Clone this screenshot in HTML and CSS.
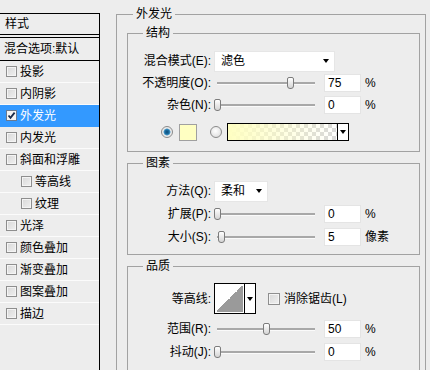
FILE: index.html
```html
<!DOCTYPE html>
<html lang="zh">
<head>
<meta charset="utf-8">
<link rel="stylesheet" href="styles.css">
</head>
<body>
<aside class="styles">
  <div class="head">样式</div>
  <div class="blend">混合选项:默认</div>
  <ul class="list">
    <li><span class="cb"></span>投影</li>
    <li><span class="cb"></span>内阴影</li>
    <li class="sel"><span class="cb on"><svg width="9" height="9" viewBox="0 0 9 9"><path d="M1.5 4.5 L3.5 6.8 L7.6 1.6" fill="none" stroke="#1a2a4a" stroke-width="1.8"/></svg></span>外发光</li>
    <li><span class="cb"></span>内发光</li>
    <li><span class="cb"></span>斜面和浮雕</li>
    <li class="sub"><span class="cb"></span>等高线</li>
    <li class="sub"><span class="cb"></span>纹理</li>
    <li><span class="cb"></span>光泽</li>
    <li><span class="cb"></span>颜色叠加</li>
    <li><span class="cb"></span>渐变叠加</li>
    <li><span class="cb"></span>图案叠加</li>
    <li><span class="cb"></span>描边</li>
  </ul>
</aside>
<main class="main">
  <fieldset class="outer">
    <legend class="outer-title">外发光</legend>

    <fieldset class="grp g1">
      <legend>结构</legend>
      <div class="row r22">
        <span class="lbl">混合模式(E):</span>
        <div class="select wide"><span>滤色</span><i class="tri"></i></div>
      </div>
      <div class="row r22">
        <span class="lbl">不透明度(O):</span>
        <div class="slider"><span class="thumb" style="left:73px"></span></div>
        <span class="num">75</span><span class="unit">%</span>
      </div>
      <div class="row r22">
        <span class="lbl">杂色(N):</span>
        <div class="slider"><span class="thumb" style="left:0px"></span></div>
        <span class="num">0</span><span class="unit">%</span>
      </div>
      <div class="row color-row">
        <span class="radio on"></span>
        <span class="swatch"></span>
        <span class="radio"></span>
        <div class="gradbox"><span class="grad"></span><span class="drop"><i class="tri"></i></span></div>
      </div>
    </fieldset>

    <fieldset class="grp g2">
      <legend>图素</legend>
      <div class="row r22">
        <span class="lbl">方法(Q):</span>
        <div class="select narrow"><span>柔和</span><i class="tri"></i></div>
      </div>
      <div class="row r23">
        <span class="lbl">扩展(P):</span>
        <div class="slider"><span class="thumb" style="left:0px"></span></div>
        <span class="num">0</span><span class="unit">%</span>
      </div>
      <div class="row r23">
        <span class="lbl">大小(S):</span>
        <div class="slider"><span class="thumb" style="left:4px"></span></div>
        <span class="num">5</span><span class="unit">像素</span>
      </div>
    </fieldset>

    <fieldset class="grp g3">
      <legend>品质</legend>
      <div class="row contour-row">
        <span class="lbl">等高线:</span>
        <div class="contour"><span class="curve"></span><span class="drop"><i class="tri"></i></span></div>
        <span class="cb aa"></span><span class="aa-text">消除锯齿(L)</span>
      </div>
      <div class="row r23 first">
        <span class="lbl">范围(R):</span>
        <div class="slider"><span class="thumb" style="left:49px"></span></div>
        <span class="num">50</span><span class="unit">%</span>
      </div>
      <div class="row r23">
        <span class="lbl">抖动(J):</span>
        <div class="slider"><span class="thumb" style="left:0px"></span></div>
        <span class="num">0</span><span class="unit">%</span>
      </div>
    </fieldset>
  </fieldset>
</main>
</body>
</html>
```

FILE: styles.css
```css
* { box-sizing: border-box; }

html, body {
  margin: 0;
  padding: 0;
}

body {
  width: 430px;
  height: 370px;
  overflow: hidden;
  display: flex;
  align-items: flex-start;
  background: #ededed;
  color: #000;
  font-family: "Liberation Sans", "Noto Sans CJK SC", sans-serif;
  font-size: 12px;
  line-height: 16px;
}

/* ---------- left style list ---------- */
.styles {
  width: 100px;
  height: 357px;
  margin-top: 13px;
  border-top: 1px solid #000;
  border-right: 1px solid #000;
  flex: none;
}

.head {
  height: 24px;
  padding: 2px 0 0 5px;
  border-bottom: 4px double #000;
}

.blend {
  height: 23px;
  padding: 3px 0 0 4px;
  border-bottom: 1px solid #000;
}

.list {
  list-style: none;
  margin: 0;
  padding: 0;
}

.list li {
  height: 22px;
  display: flex;
  align-items: center;
  padding-left: 6px;
  border-bottom: 1px solid #fbfbfb;
}

.list li.sub { padding-left: 21px; }

.list li.sel {
  background: #3399ff;
  color: #fff;
  border-bottom-color: #3399ff;
}

.cb {
  width: 11px;
  height: 11px;
  flex: none;
  margin-right: 3px;
  border: 1px solid #8e8e8e;
  background: linear-gradient(135deg, #d8d8d8, #f0f0f0);
  box-shadow: inset 0 0 0 1px #f4f4f4;
  display: flex;
  align-items: center;
  justify-content: center;
}

.cb.on {
  background: #f4f4f4;
  box-shadow: none;
  border-color: #6a7a90;
}

/* ---------- right panel ---------- */
.main {
  flex: 1;
  margin: 6px 4px 0 16px;
}

fieldset {
  margin: 0;
  min-width: 0;
  border: 1px solid #a2a2a2;
}

legend {
  padding: 0 3px;
  height: 16px;
  line-height: 16px;
}

.outer {
  padding: 3px 5px 40px 10px;
}

.outer-title { margin-left: 6px; }

.grp {
  padding: 9px 0 9px 0;
}

.grp legend { margin-left: 15px; }

.g2, .g3 { margin-top: 3px; }
.g2 { padding-bottom: 6px; }
.g3 { padding-bottom: 30px; }

.row {
  display: flex;
  align-items: center;
}

.r22 { height: 22px; }
.r23 { height: 23px; }

.lbl {
  width: 86px;
  flex: none;
  text-align: right;
  padding-right: 3px;
  white-space: nowrap;
}

.select {
  height: 21px;
  background: #fff;
  border: 1px solid #e6e6e6;
  display: flex;
  align-items: center;
  justify-content: space-between;
  padding: 0 5px 0 6px;
}

.select.wide { width: 121px; }
.select.narrow { width: 54px; }

.tri {
  display: block;
  width: 0;
  height: 0;
  border-left: 3.5px solid transparent;
  border-right: 3.5px solid transparent;
  border-top: 4px solid #000;
}

.slider {
  position: relative;
  width: 104px;
  height: 12px;
  flex: none;
}

.slider::before {
  content: "";
  position: absolute;
  left: 3px;
  right: 3px;
  top: 5px;
  height: 2px;
  background: #a8a8a8;
  border-bottom: 1px solid #fafafa;
  box-sizing: content-box;
}

.thumb {
  position: absolute;
  top: 0;
  width: 7px;
  height: 12px;
  border: 1px solid #7c7c7c;
  border-radius: 2px 2px 3px 3px;
  background: linear-gradient(#ffffff, #d4d4d4);
}

.num {
  width: 37px;
  height: 18px;
  margin-left: 6px;
  background: #fff;
  border: 1px solid #e4e4e4;
  padding: 0 0 0 3px;
  line-height: 16px;
  flex: none;
}

.unit { margin-left: 4px; }

/* colour row */
.color-row {
  height: 20px;
  margin-top: 6px;
  padding-left: 33px;
}

.radio {
  width: 12px;
  height: 12px;
  flex: none;
  border-radius: 50%;
  border: 1px solid #8a8a8a;
  background: radial-gradient(circle at 45% 40%, #ffffff, #d6d6d6);
}

.radio.on {
  background: radial-gradient(circle at 50% 50%, #0d4c78 0, #1b6fa3 2.2px, #5aa6d2 3.2px, #e6e6e6 3.8px, #f4f4f4 6px);
}

.swatch {
  width: 18px;
  height: 17px;
  margin-left: 6px;
  margin-right: 13px;
  background: #ffffc2;
  border: 1px solid #a0a0a0;
  flex: none;
}

.gradbox {
  width: 122px;
  height: 18px;
  margin-left: 5px;
  border: 1px solid #000;
  display: flex;
  flex: none;
}

.grad {
  flex: 1;
  background:
    linear-gradient(to right, #ffffc2, rgba(255, 255, 194, 0)),
    repeating-conic-gradient(#d9d9d9 0 25%, #ffffff 0 50%) 0 0 / 8px 8px;
}

.drop {
  width: 11px;
  flex: none;
  border-left: 1px solid #000;
  background: #fff;
  display: flex;
  align-items: center;
  justify-content: center;
}

/* contour row */
.contour-row { height: 31px; }

.contour {
  width: 42px;
  height: 31px;
  border: 1px solid #000;
  display: flex;
  flex: none;
}

.curve {
  flex: 1;
  border: 1px solid #fff;
  background: linear-gradient(to top left, #9a9a9a 50%, #ffffff 50%);
}

.cb.aa {
  width: 12px;
  height: 12px;
  margin-left: 12px;
  margin-right: 4px;
}

.first { margin-top: 3px; }
```
